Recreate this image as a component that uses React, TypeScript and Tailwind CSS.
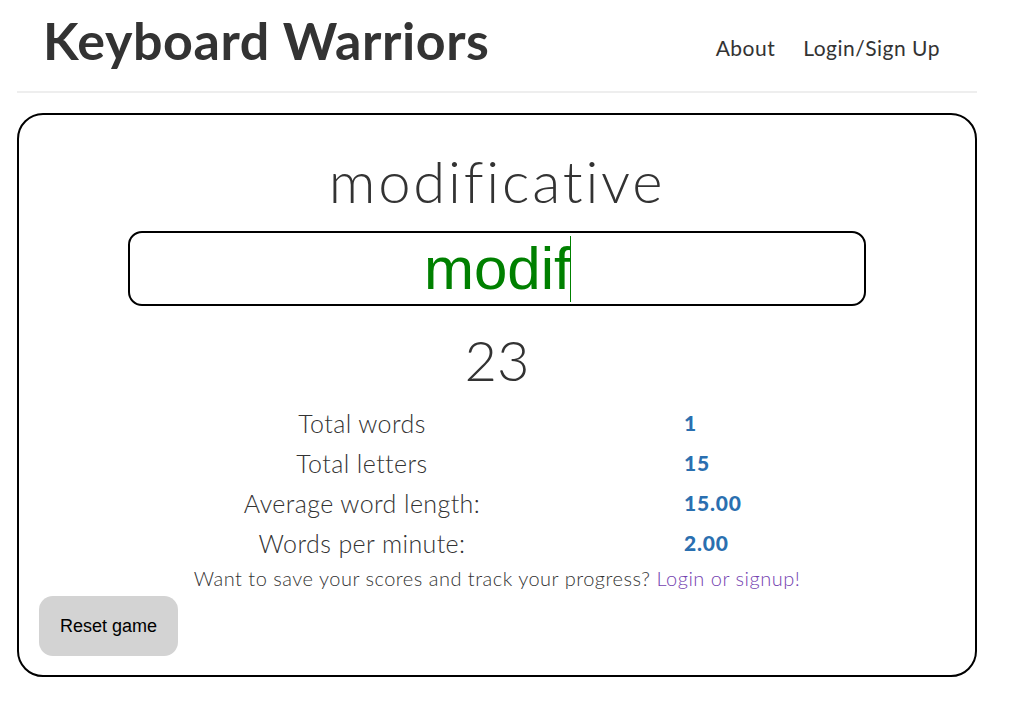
import { useState } from 'react';

const stats = [
  { label: 'Total words', value: '1' },
  { label: 'Total letters', value: '15' },
  { label: 'Average word length:', value: '15.00' },
  { label: 'Words per minute:', value: '2.00' },
];

export default function App() {
  const [typed, setTyped] = useState('modif');

  return (
    <div className="min-h-[705px] bg-white font-['Lato',sans-serif] text-[#333]">
      <div className="mx-[17px] w-[960px]">
        <header className="flex h-[93px] items-start justify-between border-b-2 border-[#eee] pl-[26px] pr-[37px]">
          <h1 className="mt-[10px] text-[52px] font-bold leading-[60px] tracking-[0.6px] text-[#333]">Keyboard Warriors</h1>
          <nav className="mt-[34px] flex gap-[28px] text-[21px] leading-[28px] tracking-[0.5px] text-[#333]">
            <a href="#">About</a>
            <a href="#">Login/Sign Up</a>
          </nav>
        </header>

        <main className="mt-[20px] flex h-[564px] flex-col items-center rounded-[26px] border-2 border-black px-[20px]">
          <div className="mt-[32px] text-[58px] font-light leading-[68px] tracking-[2.8px]">modificative</div>
          <div className="mt-[16px] flex h-[75px] w-[738px] items-center justify-center rounded-[14px] border-2 border-black">
            <div className="relative">
              <input
                value={typed}
                onChange={e => setTyped(e.target.value)}
                size={5}
                className="w-[146px] bg-transparent text-center font-['Liberation_Sans',Arial,sans-serif] text-[60px] leading-[70px] text-[#008000] caret-transparent outline-none"
              />
              <span className="absolute right-[-1px] top-[2px] h-[66px] w-px bg-[#008000]" />
            </div>
          </div>
          <div className="mt-[24px] text-[56px] font-light leading-[60px]">23</div>
          <div className="mt-[19px] grid grid-cols-[250px_270px] gap-y-[12px]">
            {stats.map(s => (
              <div key={s.label} className="contents">
                <div className="text-center text-[25px] font-light leading-[28px] tracking-[0.4px]">{s.label}</div>
                <div className="pl-[197px] text-[21px] font-black leading-[28px] tracking-[0.8px] text-[#2a6fb0]">{s.value}</div>
              </div>
            ))}
          </div>
          <p className="mt-[7px] text-[20px] font-light leading-[28px] tracking-[0.5px] text-[#333]">
            Want to save your scores and track your progress?{' '}
            <a href="#" className="text-[#7442b0]">
              Login or signup!
            </a>
          </p>
          <div className="w-full">
            <button
              type="button"
              className="mt-[4px] h-[60px] w-[139px] rounded-[14px] bg-[#d3d3d3] font-['Liberation_Sans',Arial,sans-serif] text-[18px] text-black">
              Reset game
            </button>
          </div>
        </main>
      </div>
    </div>
  );
}
